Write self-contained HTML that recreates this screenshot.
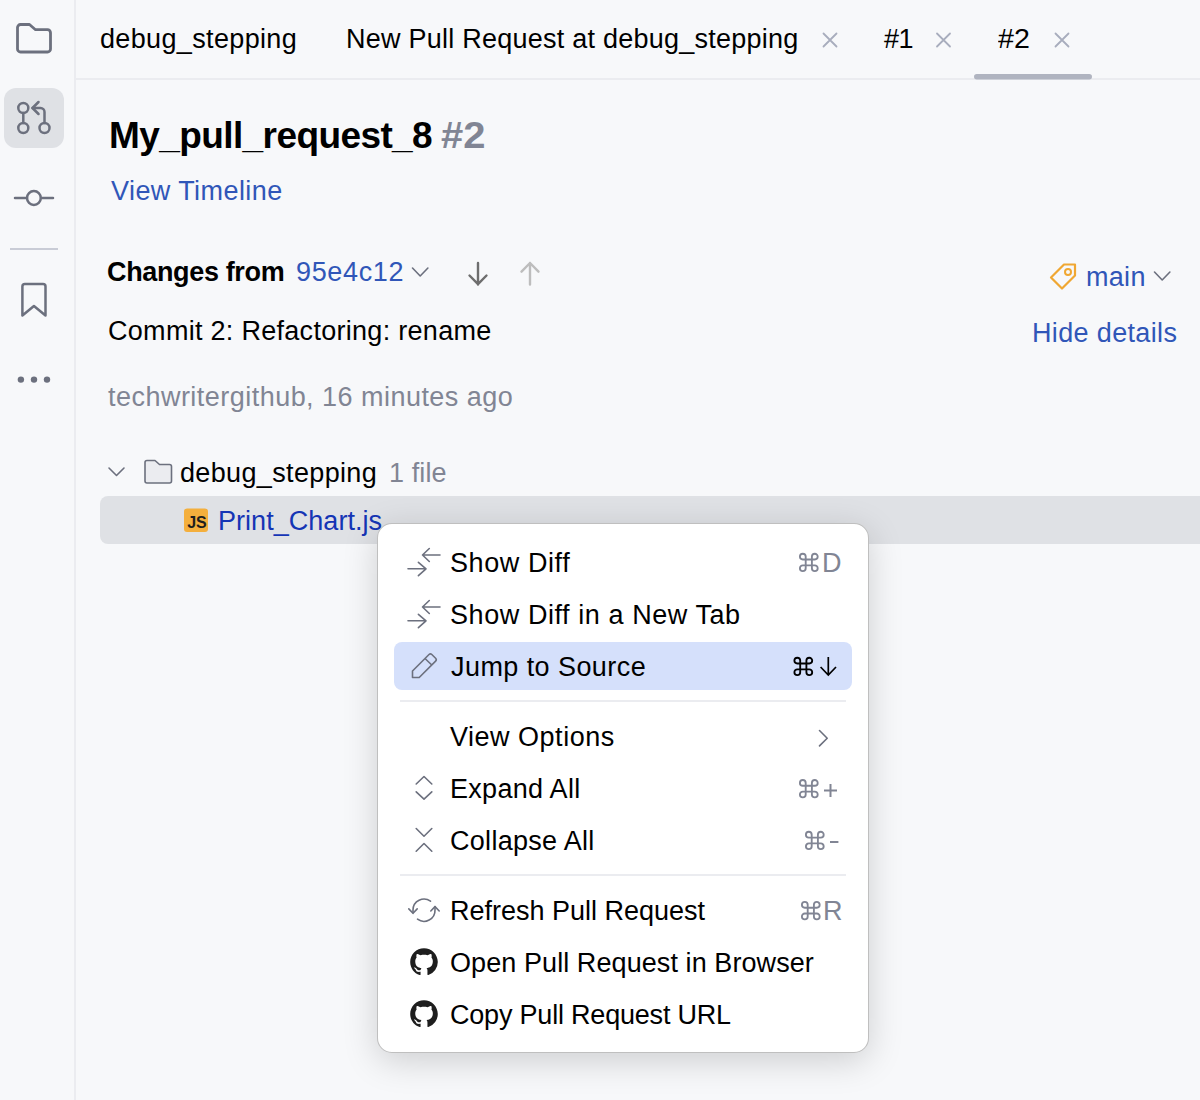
<!DOCTYPE html>
<html><head><meta charset="utf-8">
<style>
html,body{margin:0;padding:0;}
body{width:1200px;height:1100px;overflow:hidden;background:#f7f8fa;position:relative;font-family:"Liberation Sans",sans-serif;}
.t{position:absolute;white-space:pre;line-height:1;font-size:26px;color:#000;}
.a{position:absolute;}
svg{position:absolute;overflow:visible;}
</style></head><body>

<!-- left sidebar -->
<div class="a" style="left:74px;top:0;width:2px;height:1100px;background:#ebecf0;"></div>
<div class="a" style="left:76px;top:78px;width:1124px;height:2px;background:#ebecf0;"></div>

<svg style="left:0;top:0" width="75" height="400">
  <g fill="none" stroke="#6c707e" stroke-width="2.8" stroke-linejoin="round" stroke-linecap="round">
    <!-- folder -->
    <path d="M17.5 27.5 a3 3 0 0 1 3 -3 h9 l6 5.2 h12 a3 3 0 0 1 3 3 v16.3 a3 3 0 0 1 -3 3 h-27 a3 3 0 0 1 -3 -3 z"/>
  </g>
  <rect x="4" y="88" width="60" height="60" rx="12" fill="#dfe1e5"/>
  <g fill="none" stroke="#6c707e" stroke-width="2.5" stroke-linecap="round" stroke-linejoin="round">
    <circle cx="23.3" cy="108" r="5"/>
    <circle cx="23.3" cy="128" r="5"/>
    <circle cx="44.5" cy="128" r="5"/>
    <path d="M23.3 113 v10"/>
    <path d="M44.5 123 v-11 a4 4 0 0 0 -4 -4 h-8"/>
    <path d="M38.5 102 l-6 6 l6 6"/>
    <!-- commit -->
    <path d="M15 198 h12 M41 198 h12"/>
    <circle cx="33.9" cy="198" r="6.9"/>
    <!-- bookmark -->
    <path d="M22.4 286.5 a2.5 2.5 0 0 1 2.5 -2.5 h18.1 a2.5 2.5 0 0 1 2.5 2.5 v29 l-11.55 -9.5 l-11.55 9.5 z"/>
  </g>
  <rect x="10" y="248" width="48" height="2" fill="#c9ccd6"/>
  <g fill="#6c707e">
    <circle cx="20.9" cy="379.6" r="3.2"/>
    <circle cx="34" cy="379.6" r="3.2"/>
    <circle cx="47" cy="379.6" r="3.2"/>
  </g>
</svg>

<!-- tabs -->
<div class="t" style="left:100px;top:26.15px;letter-spacing:0.35px;font-size:27px;">debug_stepping</div>
<div class="t" style="left:346px;top:26.15px;letter-spacing:0.24px;font-size:27px;">New Pull Request at debug_stepping</div>
<div class="t" style="left:884px;top:26.15px;font-size:27px;letter-spacing:-0.56px;">#1</div>
<div class="t" style="left:998px;top:26.15px;transform:scaleX(1.06);transform-origin:0 0;font-size:27px;">#2</div>
<svg style="left:0;top:0" width="1200" height="80">
  <g stroke="#a8adbd" stroke-width="1.8" stroke-linecap="round">
    <path d="M823.5 33.5 l13 13 M836.5 33.5 l-13 13"/>
    <path d="M937 33.5 l13 13 M950 33.5 l-13 13"/>
    <path d="M1055.5 33.5 l13 13 M1068.5 33.5 l-13 13"/>
  </g>
  <rect x="974" y="74" width="118" height="5.5" rx="2.75" fill="#b0b4c0"/>
</svg>

<!-- header -->
<div class="t" style="left:109px;top:117.15px;font-size:37px;font-weight:700;letter-spacing:-0.59px;">My_pull_request_8</div>
<div class="t" style="left:441px;top:117.15px;font-size:37px;font-weight:700;color:#818594;transform:scaleX(1.08);transform-origin:0 0;">#2</div>
<div class="t" style="left:111px;top:178.15px;color:#3056b8;letter-spacing:0.43px;font-size:27px;">View Timeline</div>

<div class="t" style="left:107px;top:259.15px;font-weight:700;letter-spacing:-0.35px;font-size:27px;">Changes from</div>
<div class="t" style="left:296px;top:259.15px;color:#3056b8;letter-spacing:0.65px;font-size:27px;">95e4c12</div>
<svg style="left:0;top:0" width="1200" height="300">
  <g fill="none" stroke-linecap="round" stroke-linejoin="round">
    <path d="M412.5 268 l7.7 8 l7.7 -8" stroke="#6c707e" stroke-width="1.6"/>
    <path d="M478 263 v21.5 M469.5 275.5 l8.5 8.7 l8.5 -8.7" stroke="#6e6e6e" stroke-width="2.4"/>
    <path d="M530 284.5 v-21.5 M521.5 271.7 l8.5 -8.7 l8.5 8.7" stroke="#bdbdbd" stroke-width="2.4"/>
    <path d="M1154.5 272 l7.7 8 l7.7 -8" stroke="#6c707e" stroke-width="1.6"/>
    <!-- tag -->
    <path d="M1051 277.5 l13 -13 h11 v11 l-13 13 z" stroke="#f0a732" stroke-width="2.2"/>
    <circle cx="1068" cy="272" r="3" stroke="#f0a732" stroke-width="2"/>
  </g>
</svg>
<div class="t" style="left:1086px;top:264px;font-size:27px;color:#3056b8;letter-spacing:0.3px;">main</div>
<div class="t" style="left:108px;top:318.15px;letter-spacing:0.29px;font-size:27px;">Commit 2: Refactoring: rename</div>
<div class="t" style="left:1032px;top:320.15px;color:#3056b8;letter-spacing:0.35px;font-size:27px;">Hide details</div>
<div class="t" style="left:108px;top:384.15px;color:#818594;letter-spacing:0.47px;font-size:27px;">techwritergithub, 16 minutes ago</div>

<!-- tree -->
<div class="a" style="left:100px;top:496px;width:1110px;height:48px;background:#dfe1e5;border-radius:8px;"></div>
<svg style="left:0;top:0" width="600" height="560">
  <path d="M109 468 l7.5 7.5 l7.5 -7.5" fill="none" stroke="#6c707e" stroke-width="1.6" stroke-linecap="round" stroke-linejoin="round"/>
  <path d="M145 462.5 a2 2 0 0 1 2 -2 h8 l4.5 4 h10 a2 2 0 0 1 2 2 v14.5 a2 2 0 0 1 -2 2 h-22.5 a2 2 0 0 1 -2 -2 z" fill="#ebecf0" stroke="#6c707e" stroke-width="1.6" stroke-linejoin="round"/>
  <rect x="184" y="508.5" width="24" height="23.5" rx="3" fill="#f4af3d"/>
  <text x="197" y="528" font-family="Liberation Sans" font-size="16" font-weight="700" text-anchor="middle" fill="#1e1e1e">JS</text>
</svg>
<div class="t" style="left:180px;top:460.15px;letter-spacing:0.35px;font-size:27px;">debug_stepping</div>
<div class="t" style="left:389px;top:460.15px;color:#818594;letter-spacing:0.1px;font-size:27px;">1 file</div>
<div class="t" style="left:218px;top:508.15px;color:#1535b5;letter-spacing:0.04px;font-size:27px;">Print_Chart.js</div>

<!-- popup -->
<div class="a" style="left:377px;top:523px;width:490px;height:528px;background:#fff;border:1px solid rgba(0,0,0,0.25);border-radius:15px;box-shadow:0 8px 34px rgba(0,0,0,0.17);"></div>
<div class="a" style="left:394px;top:642px;width:458px;height:48px;background:#d5e0fb;border-radius:8px;"></div>
<div class="a" style="left:400px;top:700px;width:446px;height:2px;background:#ebecf0;"></div>
<div class="a" style="left:400px;top:874px;width:446px;height:2px;background:#ebecf0;"></div>

<div class="t" style="left:450px;top:550.15px;letter-spacing:0.58px;font-size:27px;">Show Diff</div>
<div class="t" style="left:450px;top:602.15px;letter-spacing:0.57px;font-size:27px;">Show Diff in a New Tab</div>
<div class="t" style="left:451px;top:654.15px;letter-spacing:0.43px;font-size:27px;">Jump to Source</div>
<div class="t" style="left:450px;top:724.15px;letter-spacing:0.51px;font-size:27px;">View Options</div>
<div class="t" style="left:450px;top:776.15px;letter-spacing:0.29px;font-size:27px;">Expand All</div>
<div class="t" style="left:450px;top:828.15px;letter-spacing:0.29px;font-size:27px;">Collapse All</div>
<div class="t" style="left:450px;top:898.15px;letter-spacing:-0.01px;font-size:27px;">Refresh Pull Request</div>
<div class="t" style="left:450px;top:950.15px;letter-spacing:0.08px;font-size:27px;">Open Pull Request in Browser</div>
<div class="t" style="left:450px;top:1002.15px;letter-spacing:-0.20px;font-size:27px;">Copy Pull Request URL</div>

<!-- shortcut text -->
<div class="t" style="left:822px;top:550.15px;color:#818594;font-size:27px;">D</div>
<div class="t" style="left:823px;top:898.15px;color:#818594;font-size:27px;">R</div>

<svg style="left:0;top:0" width="1200" height="1100">
  <defs>
    <path id="cmdg" fill="none" stroke-width="1.85" stroke-linejoin="round" d="M6.7 7 H12.9 V12.8 H6.7 Z M6.7 7 V4.1 A2.9 2.9 0 1 0 3.8 7 Z M12.9 7 V4.1 A2.9 2.9 0 1 1 15.8 7 Z M6.7 12.8 V15.7 A2.9 2.9 0 1 1 3.8 12.8 Z M12.9 12.8 V15.7 A2.9 2.9 0 1 0 15.8 12.8 Z"/>
  </defs>
  <g stroke="#818594"><use href="#cmdg" x="799" y="552.5"/></g>
  <g stroke="#000"><use href="#cmdg" x="793.5" y="656.5"/></g>
  <g stroke="#818594"><use href="#cmdg" x="799" y="778.8"/></g>
  <path d="M824 790.5 h13 M830.5 784 v13 M830 842 h8.4" stroke="#818594" stroke-width="2"/>
  <g stroke="#818594"><use href="#cmdg" x="805" y="830.6"/></g>
  <g stroke="#818594"><use href="#cmdg" x="801" y="900.7"/></g>
  <path d="M828.3 657 v18 M820.6 667 l7.7 8 l7.7 -8" fill="none" stroke="#000" stroke-width="1.7"/>

  <g fill="none" stroke="#6c707e" stroke-width="1.6" stroke-linecap="round" stroke-linejoin="round">
    <!-- diff icons -->
    <path d="M422.5 555 h17.5 M429.3 548.5 l-6.8 6.5 l6.8 6.5"/>
    <path d="M408 568.8 h18 M418.4 562.3 l7.6 6.5 l-7.6 6.9"/>
    <path d="M422.5 607 h17.5 M429.3 600.5 l-6.8 6.5 l6.8 6.5"/>
    <path d="M408 620.8 h18 M418.4 614.3 l7.6 6.5 l-7.6 6.9"/>
    <!-- pencil -->
    <path d="M412.5 677.5 v-6.5 l16.5 -16.5 a2 2 0 0 1 2.8 0 l3.8 3.8 a2 2 0 0 1 0 2.8 l-16.4 16.4 z M425 658.5 l6.5 6.3"/>
    <!-- chevron right -->
    <path d="M819.5 730.5 l7.7 7.7 l-7.7 7.7"/>
    <!-- expand -->
    <path d="M416.2 784 l7.8 -7.5 l7.8 7.5 M416.2 791.8 l7.8 7.4 l7.8 -7.4"/>
    <!-- collapse -->
    <path d="M416.2 828.5 l7.8 7.7 l7.8 -7.7 M416.2 851.2 l7.8 -7.7 l7.8 7.7"/>
    <!-- refresh -->
    <path d="M413 912.8 V910 A11 11 0 0 1 430.5 901.2"/>
    <path d="M408.8 908.9 L413 913.3 L417.2 908.9"/>
    <path d="M435 906.6 V910 A11 11 0 0 1 417.5 919.2"/>
    <path d="M430.8 911 L435 906.6 L439.2 911"/>
  </g>
  <!-- github -->
  <g fill="#1e1e1e">
    <path id="gh" transform="translate(410.2 948.2) scale(1.725)" d="M8 0C3.58 0 0 3.58 0 8c0 3.54 2.29 6.53 5.47 7.59.4.07.55-.17.55-.38 0-.19-.01-.82-.01-1.49-2.01.37-2.53-.49-2.69-.94-.09-.23-.48-.94-.82-1.13-.28-.15-.68-.52-.01-.53.63-.01 1.08.58 1.23.82.72 1.21 1.87.87 2.33.66.07-.52.28-.87.51-1.07-1.78-.2-3.64-.89-3.64-3.95 0-.87.31-1.59.82-2.15-.08-.2-.36-1.02.08-2.12 0 0 .67-.21 2.2.82.64-.18 1.32-.27 2-.27.68 0 1.36.09 2 .27 1.53-1.04 2.2-.82 2.2-.82.44 1.1.16 1.92.08 2.12.51.56.82 1.27.82 2.15 0 3.07-1.87 3.75-3.65 3.95.29.25.54.73.54 1.48 0 1.07-.01 1.93-.01 2.2 0 .21.15.46.55.38A8.013 8.013 0 0016 8c0-4.42-3.58-8-8-8z"/>
    <use href="#gh" y="52"/>
  </g>
</svg>

</body></html>
